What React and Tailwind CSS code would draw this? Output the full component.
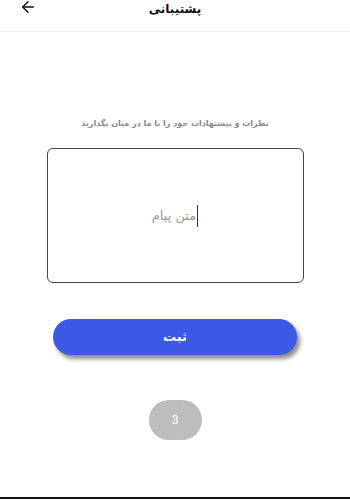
import { ArrowLeft } from "lucide-react";

const App = () => {
  return (
    <div
      dir="rtl"
      className="relative w-[350px] h-[500px] bg-white flex flex-col"
      style={{ fontFamily: '"DejaVu Sans", sans-serif' }}
    >
      {/* Header */}
      <div className="h-[32px] border-b border-[#ececec] flex items-start justify-center relative">
        <span className="text-[12px] font-bold text-[#111] leading-[16px] mt-[1px]">
          پشتیبانی
        </span>
        <ArrowLeft
          size={18}
          strokeWidth={2}
          className="absolute left-[19px] top-[-2px] text-[#111]"
        />
      </div>

      {/* Content */}
      <div className="flex flex-col items-center">
        <p className="mt-[85px] text-[8px] font-bold text-[#8a8a8a] leading-[14px]">
          نظرات و پیشنهادات خود را با ما در میان بگذارید
        </p>

        <div className="mt-[17px] w-[257px] h-[135px] border-[1.5px] border-[#444] rounded-[6px] flex items-center justify-center">
          <div className="flex items-center">
            <span className="w-px h-[22px] bg-[#333] ml-[1px]" />
            <span className="text-[13px] text-[#9a9a9a]">متن پیام</span>
          </div>
        </div>

        <button className="mt-[36px] w-[244px] h-[36px] rounded-full bg-[#3b59e6] text-white text-[13px] font-bold shadow-[3px_4px_4px_rgba(0,0,0,0.45)]">
          ثبت
        </button>

        <div
          className="mt-[45px] w-[53px] h-[40px] rounded-full bg-[#bdbdbd] text-white text-[12px] flex items-center justify-center"
          style={{ fontFamily: "Roboto, sans-serif" }}
        >
          3
        </div>
      </div>

      <div className="absolute left-0 right-0 top-[497px] h-[2px] bg-[#111]" />
    </div>
  );
};

export default App;
